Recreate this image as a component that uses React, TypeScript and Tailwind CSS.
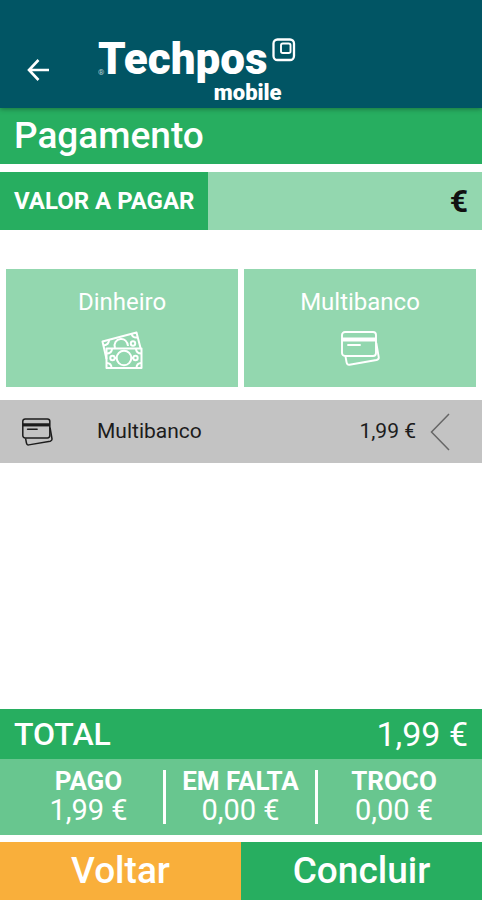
import React, { useState } from 'react';

const BackArrow: React.FC = () => (
  <svg viewBox="0 0 24 24" className="w-6 h-6" fill="none" stroke="currentColor" strokeWidth="2.6" aria-hidden="true">
    <path d="M12.500 2 3 12l9.500 10M3 12h20" />
  </svg>
);

const LogoMark: React.FC = () => (
  <svg viewBox="0 0 24 24" className="w-6 h-6" fill="none" stroke="currentColor" aria-hidden="true">
    <rect x="1.500" y="1.500" width="20.500" height="20.500" rx="4" strokeWidth="2.300" />
    <rect x="9" y="5.500" width="9.500" height="9.500" rx="1.800" strokeWidth="1.900" />
  </svg>
);

const CashIcon: React.FC = () => (
  <svg viewBox="0 0 42 38" className="w-[42px] h-[38px]" fill="none" stroke="currentColor" strokeWidth="2" strokeLinejoin="round" aria-hidden="true">
    <path d="M5.500 28 1.500 10.500 35.500 1.500 39.500 17" />
    <path d="M8 9c0 3-2 5-5.500 5.500M30.500 3c1 3 3 4 6 3.500" />
    <path d="M14 17c-1.500-4.500 1-8.500 5.500-9 4-.5 7 2.500 7.500 7" />
    <circle cx="32" cy="12.500" r="2.200" />
    <path d="M5.500 17.500h35V37h-35z" />
    <path d="M11 17.500c0 3-2 5-5.500 5M35 17.500c0 3 2 5 5.500 5M5.500 32c3 0 5 2 5 5M40.500 32c-3 0-5 2-5 5" />
    <circle cx="23" cy="27" r="7.300" />
    <circle cx="11.500" cy="27" r="2.200" />
    <circle cx="34.500" cy="27" r="2.200" />
    <path d="M13.500 27h2M30.500 27h2" />
  </svg>
);

const CardsIcon: React.FC<{ className: string }> = ({ className }) => (
  <svg viewBox="0 0 39 35" className={className} fill="none" stroke="currentColor" strokeWidth="1.900" strokeLinejoin="round" aria-hidden="true">
    <rect x="1" y="1" width="34" height="24" rx="3" />
    <path d="M1 8.500h34" strokeWidth="4" />
    <path d="M7 14h12" strokeLinecap="round" />
    <path d="M4.500 25.500l1 5.500c.3 2 1.300 3 3 2.700L35.500 29c1.700-.4 2.500-1.400 2.200-3L35.300 12" />
  </svg>
);

const totals = [
  { label: 'PAGO', value: '1,99 €' },
  { label: 'EM FALTA', value: '0,00 €' },
  { label: 'TROCO', value: '0,00 €' },
];

export default function App() {
  const [amount, setAmount] = useState('');

  return (
    <div className="min-h-screen flex flex-col bg-white font-[Roboto,sans-serif] text-white">
      {/* Topbar */}
      <header className="relative z-10 flex items-end h-[108px] px-[26px] pb-1 bg-[#015564] shadow-[0_1px_5px_rgba(0,0,0,0.35)]">
        <button type="button" aria-label="Voltar atrás" className="mb-[22px]">
          <BackArrow />
        </button>
        <div className="relative ml-12 flex flex-col">
          <div className="flex items-start gap-1">
            <span className="text-[44px] leading-[42px] font-black">Techpos</span>
            <LogoMark />
          </div>
          <span className="self-end mr-[14px] mt-[2px] text-[22px] leading-[22px] font-black">mobile</span>
          <span className="absolute left-0 top-[30px] text-[8px] leading-[10px] opacity-70">®</span>
        </div>
      </header>

      <main className="flex-1 flex flex-col">
        <h1 className="h-14 px-[14px] bg-[#27ae60] text-[37px] leading-[56px] font-medium">Pagamento</h1>

        <div className="mt-2 flex h-[58px] bg-[#93d7af]">
          <label htmlFor="amount" className="flex items-center px-[14px] bg-[#27ae60] text-[24px] font-bold whitespace-nowrap">
            VALOR A PAGAR
          </label>
          <input
            id="amount"
            type="text"
            inputMode="decimal"
            value={amount}
            onChange={(e) => setAmount(e.target.value)}
            className="flex-1 min-w-0 px-2 text-right text-[32px] text-black bg-transparent outline-none"
          />
          <span className="self-center pr-[14px] text-[32px] font-bold text-[#111]">€</span>
        </div>

        {/* Payment methods */}
        <div className="mt-[39px] px-[6px] grid grid-cols-2 gap-[6px]">
          <button type="button" className="flex flex-col items-center h-[118px] pt-4 gap-3 bg-[#93d7af] text-[24px] leading-[34px]">
            Dinheiro
            <CashIcon />
          </button>
          <button type="button" className="flex flex-col items-center h-[118px] pt-4 gap-3 bg-[#93d7af] text-[24px] leading-[34px]">
            Multibanco
            <CardsIcon className="w-[39px] h-[35px]" />
          </button>
        </div>

        {/* Registered payments */}
        <ul className="mt-[13px]">
          <li className="flex items-center h-[63px] pl-[22px] pr-8 bg-[#c3c3c3] text-[21px] text-[#1c1c1c]">
            <CardsIcon className="w-[31px] h-7" />
            <span className="ml-11">Multibanco</span>
            <span className="ml-auto">1,99 €</span>
            <button type="button" aria-label="Mostrar opções" className="ml-[14px] text-[#666]">
              <svg viewBox="0 0 20 38" className="w-5 h-[38px]" fill="none" stroke="currentColor" strokeWidth="1.500">
                <path d="M19 1 1.500 19 19 37" />
              </svg>
            </button>
          </li>
        </ul>
      </main>

      <footer>
        <div className="flex items-center justify-between h-[50px] px-[14px] bg-[#27ae60]">
          <span className="text-[32px] font-medium">TOTAL</span>
          <span className="text-[34px]">1,99 €</span>
        </div>
        <dl className="grid grid-cols-3 h-[76px] pl-[14px] pr-3 py-[11px] bg-[#68c68f] divide-x-3 divide-white text-center">
          {totals.map((t) => (
            <div key={t.label} className="flex flex-col justify-center gap-1">
              <dt className="text-[26px] leading-[22px] font-bold">{t.label}</dt>
              <dd className="text-[29px] leading-[28px]">{t.value}</dd>
            </div>
          ))}
        </dl>
        <div className="mt-[7px] grid grid-cols-2 h-[58px] text-[37px] font-medium">
          <button type="button" className="bg-[#f9af3b]">Voltar</button>
          <button type="button" className="bg-[#27ae60]">Concluir</button>
        </div>
      </footer>
    </div>
  );
}
